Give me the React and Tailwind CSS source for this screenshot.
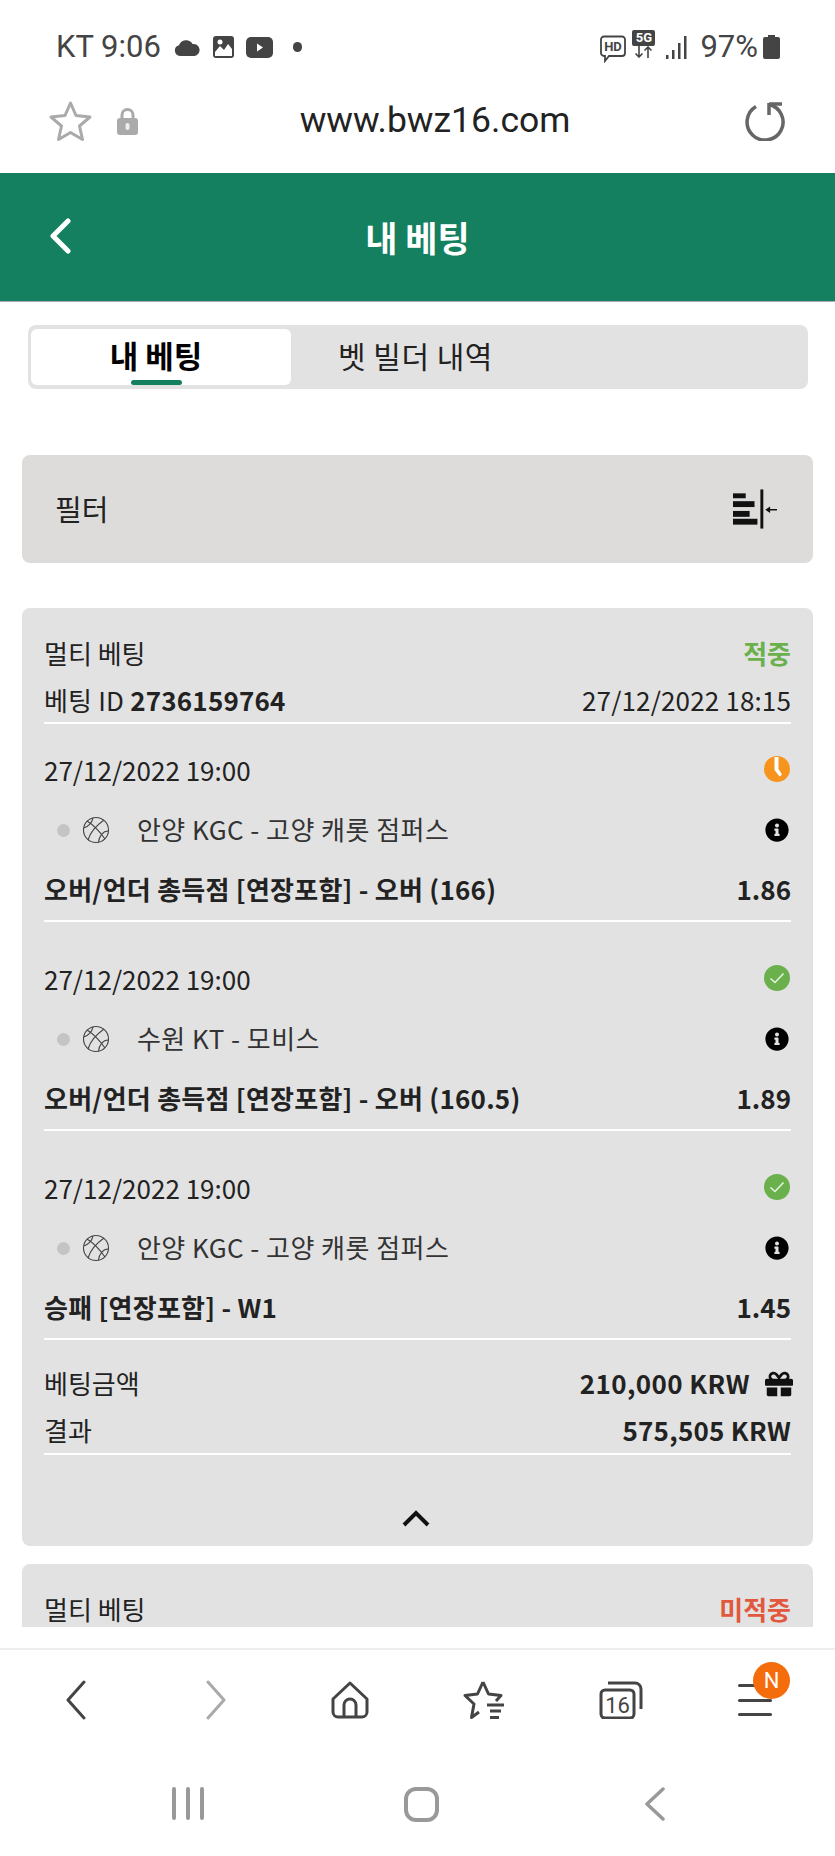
import { FaGift, FaInfoCircle } from "react-icons/fa";

function Ball() {
  return (
    <svg width="28" height="28" viewBox="0 0 28 28" fill="none" stroke="#444" strokeWidth="1.1">
      <circle cx="14" cy="14" r="12.5" />
      <path d="M5 5 C10 8 18 16 23 23" />
      <path d="M22 4 C15 9 8 17 6 24" />
      <path d="M1.8 12 C6 11 10 7 11 1.8" />
      <path d="M26.3 15 C21 15 17 20 16.5 26.3" />
    </svg>
  );
}

function Clock() {
  return (
    <svg width="26" height="26" viewBox="0 0 26 26">
      <circle cx="13" cy="13" r="13" fill="#f7941d" />
      <path d="M10.5 1 L10.5 14 L15.5 20.5 L18 18.5 L14.5 13 L14.5 1 Z" fill="#fff" />
    </svg>
  );
}

function Check() {
  return (
    <svg width="26" height="26" viewBox="0 0 26 26">
      <circle cx="13" cy="13" r="13" fill="#6ab04c" />
      <path d="M6.5 13.5 L11 17.5 L19.5 8.5" fill="none" stroke="#e8f3e2" strokeWidth="1.6" />
    </svg>
  );
}

function Leg({ time, status, game, market, odds }) {
  return (
    <div className="pt-6 border-b-2 border-white">
      <div className="h-12 flex items-center justify-between">
        <span className="pb-[5px]">{time}</span>
        <span className="mb-[6px] mr-px">{status === "wait" ? <Clock /> : <Check />}</span>
      </div>
      <div className="h-12 mt-[10px] flex items-center justify-between">
        <div className="flex items-center">
          <span className="w-[13px] h-[13px] rounded-full bg-[#c4c4c6] ml-[13px]" />
          <span className="ml-[12px]"><Ball /></span>
          <span className="ml-[27px] pb-[3px] text-[#333] tracking-[0.45px]">{game}</span>
        </div>
        <FaInfoCircle className="text-[24px] text-black mr-[2px]" />
      </div>
      <div className="h-12 mt-3 mb-[6px] flex items-center justify-between font-bold">
        <span className="pb-[3px] tracking-[0.25px]">{market}</span>
        <span className="pb-[3px]">{odds}</span>
      </div>
    </div>
  );
}

function StatusBar() {
  return (
    <div className="h-[94px] pl-[56px] pr-[55px] flex items-center justify-between text-[#444] font-['Roboto',sans-serif] text-[31px]">
      <div className="flex items-center">
        <span>KT 9:06</span>
        <svg className="ml-[13px]" width="26" height="17" viewBox="0 0 26 17" fill="#444">
          <path d="M6 17 A5.5 5.5 0 0 1 5 6.2 A7.5 7.5 0 0 1 18.5 5 A6 6 0 0 1 20.5 17 Z" />
        </svg>
        <svg className="ml-[12px]" width="23" height="24" viewBox="0 0 23 24">
          <rect x="1" y="1" width="21" height="22" rx="3" fill="#444" />
          <path d="M3 21 V17 L8 11 L12 15 L16 9 L20 14 V21 Z" fill="#fff" />
          <circle cx="8" cy="7" r="2.5" fill="#fff" />
        </svg>
        <svg className="ml-[11px]" width="27" height="21" viewBox="0 0 27 21">
          <rect width="27" height="21" rx="5" fill="#444" />
          <path d="M11 6.5 L17 10.5 L11 14.5 Z" fill="#fff" />
        </svg>
        <span className="w-[9px] h-[10px] rounded-full bg-[#444] ml-[20px]" />
      </div>
      <div className="flex items-center">
        <svg width="26" height="28" viewBox="0 0 26 28" className="mt-[4px]">
          <path d="M4 1.5 H22 A3 3 0 0 1 25 4.5 V18 A3 3 0 0 1 22 21 H9 L5 26 V21 H4 A3 3 0 0 1 1 18 V4.5 A3 3 0 0 1 4 1.5 Z" fill="none" stroke="#444" strokeWidth="1.8" />
          <text x="13" y="16" textAnchor="middle" fontSize="13" fontWeight="700" fill="#444" fontFamily="Roboto, sans-serif">HD</text>
        </svg>
        <div className="ml-[6px] w-[23px] flex flex-col items-center -mt-[6px]">
          <span className="w-[23px] h-[16px] bg-[#444] rounded-[2px] text-white text-[13px] font-bold leading-[16px] text-center">5G</span>
          <svg width="20" height="12" viewBox="0 0 20 12" fill="none" stroke="#444" strokeWidth="1.6">
            <path d="M5 0 V11 M1.5 7.5 L5 11 L8.5 7.5 M14 12 V1 M10.5 4.5 L14 1 L17.5 4.5" />
          </svg>
        </div>
        <svg className="ml-[11px]" width="22" height="23" viewBox="0 0 22 23" fill="#444">
          <rect x="0" y="19" width="2.5" height="4" />
          <rect x="6" y="14" width="2.5" height="9" />
          <rect x="12" y="7" width="2.5" height="16" />
          <rect x="18" y="0" width="2.5" height="23" />
        </svg>
        <span className="ml-[12px]">97%</span>
        <svg className="ml-[5px]" width="17" height="24" viewBox="0 0 17 24" fill="#444">
          <rect x="5" width="7" height="3" />
          <rect y="2" width="17" height="22" rx="2" />
        </svg>
      </div>
    </div>
  );
}

function AddressBar() {
  return (
    <div className="h-[79px] flex items-center justify-between pl-[49px] pr-[50px] pb-[26px]">
      <div className="flex items-center">
        <svg width="43" height="42" viewBox="0 0 43 42" fill="none" stroke="#aaa" strokeWidth="3" strokeLinejoin="round">
          <path d="M21.5 3 L27 15.5 L41 17 L30.5 26 L33.5 39.5 L21.5 32.5 L9.5 39.5 L12.5 26 L2 17 L16 15.5 Z" />
        </svg>
        <svg className="ml-[25px]" width="21" height="28" viewBox="0 0 21 28">
          <path d="M5 13 V8 A5.5 5.5 0 0 1 16 8 V13" fill="none" stroke="#aaa" strokeWidth="3" />
          <rect y="11" width="21" height="17" rx="3" fill="#aaa" />
          <rect x="8.5" y="16" width="4" height="7" rx="2" fill="#eee" />
        </svg>
      </div>
      <span className="font-['Roboto',sans-serif] text-[35.5px] text-[#222] mr-[13px]">www.bwz16.com</span>
      <svg width="40" height="40" viewBox="0 0 40 40" fill="none" stroke="#666" strokeWidth="3.5">
        <path d="M11 5.5 A18 18 0 1 0 24 3.5" />
        <path d="M24 3 H37 M24 2 V14" />
      </svg>
    </div>
  );
}

function BottomBar() {
  return (
    <div className="border-t-2 border-[#eee] bg-white">
      <div className="h-[104px] pl-[66px] flex items-center pb-[4px]">
        <svg width="20" height="40" viewBox="0 0 20 40" fill="none" stroke="#444" strokeWidth="3" strokeLinecap="round" strokeLinejoin="round">
          <path d="M18 2 L2 20 L18 38" />
        </svg>
        <svg className="ml-[120px]" width="20" height="40" viewBox="0 0 20 40" fill="none" stroke="#aaa" strokeWidth="3" strokeLinecap="round" strokeLinejoin="round">
          <path d="M2 2 L18 20 L2 38" />
        </svg>
        <svg className="ml-[105px]" width="38" height="38" viewBox="0 0 38 38" fill="none" stroke="#444" strokeWidth="3" strokeLinejoin="round">
          <path d="M19 2 L36 18 V31 A5 5 0 0 1 31 36 H7 A5 5 0 0 1 2 31 V18 Z" />
          <path d="M13 36 V24 A6 6 0 0 1 25 24 V36" />
        </svg>
        <svg className="ml-[94px]" width="42" height="40" viewBox="0 0 42 40" fill="none" stroke="#444" strokeWidth="3" strokeLinejoin="round">
          <path d="M20 2 L25.5 14 L38 15.5 L33 21 M20 2 L14.5 14 L2 15.5 L11 24 L8.5 37.5 L16 32" />
          <path d="M24 25 H41 M27 31 H38 M27 37.5 H36" />
        </svg>
        <svg className="ml-[94px]" width="44" height="38" viewBox="0 0 44 38" fill="none" stroke="#444" strokeWidth="3">
          <path d="M9 2 H36 A6 6 0 0 1 42 8 V28" />
          <rect x="2" y="9" width="33" height="28" rx="4" />
          <text x="18.5" y="32" textAnchor="middle" fontSize="22" fill="#444" stroke="none" fontFamily="Roboto, sans-serif">16</text>
        </svg>
        <div className="relative ml-[95px] w-[34px] h-[32px] flex flex-col justify-between">
          <span className="h-[3px] rounded bg-[#444]" />
          <span className="h-[3px] rounded bg-[#444]" />
          <span className="h-[3px] rounded bg-[#444]" />
          <span className="absolute -top-[22px] left-[15px] w-[37px] h-[37px] rounded-full bg-[#f46c0c] text-white text-[22px] font-['Roboto',sans-serif] flex items-center justify-center">
            N
          </span>
        </div>
      </div>
      <div className="h-[102px] flex items-start pl-[172px] pt-[33px]">
        <div className="w-[32px] h-[33px] flex justify-between">
          <span className="w-[4px] h-full rounded bg-[#999]" />
          <span className="w-[4px] h-full rounded bg-[#999]" />
          <span className="w-[4px] h-full rounded bg-[#999]" />
        </div>
        <div className="ml-[200px] w-[35px] h-[35px] border-4 border-[#999] rounded-[12px]" />
        <svg className="ml-[206px]" width="20" height="34" viewBox="0 0 20 34" fill="none" stroke="#999" strokeWidth="3.5" strokeLinecap="round" strokeLinejoin="round">
          <path d="M18 2 L2 17 L18 32" />
        </svg>
      </div>
    </div>
  );
}

export default function App() {
  return (
    <div className="w-[835px] h-[1856px] bg-white flex flex-col overflow-hidden font-['Noto_Sans_CJK_KR','Noto_Sans',sans-serif] text-[#222]">
      <StatusBar />
      <AddressBar />

      <div className="h-[129px] shrink-0 bg-[#15805f] flex items-center border-b border-[#aab]">
        <svg className="ml-[49px] -mt-[2px]" width="22" height="36" viewBox="0 0 22 36" fill="none" stroke="#fff" strokeWidth="5" strokeLinecap="round" strokeLinejoin="round">
          <path d="M19 3 L4 18 L19 33" />
        </svg>
        <h1 className="flex-1 text-center pr-[71px] text-[35px] font-bold text-white">내 베팅</h1>
      </div>

      <div className="flex-1 overflow-hidden px-[22px]">
        <div className="mt-[23px] ml-[6px] mr-[5px] h-[64px] rounded-lg bg-[#e2e2e2] pl-[3px] pt-[4px] flex">
          <div className="relative w-[260px] h-[56px] rounded-md bg-white flex items-center justify-center text-[31px] font-bold text-black pb-1 pr-[10px]">
            내 베팅
            <span className="absolute bottom-0 left-[100px] w-[51px] h-[5px] rounded bg-[#15805f]" />
          </div>
          <div className="ml-[47px] h-[56px] flex items-center text-[30px] tracking-[0.5px] text-[#222] pb-1">벳 빌더 내역</div>
        </div>

        <div className="mt-[66px] h-[108px] rounded-lg bg-[#dddcdb] pl-[33px] pr-[36px] flex items-center justify-between">
          <span className="text-[29px]">필터</span>
          <svg width="44" height="40" viewBox="0 0 45 40" fill="#111">
            <rect x="0" y="4" width="13" height="5" />
            <rect x="0" y="12" width="22" height="6" />
            <rect x="0" y="22" width="17" height="6" />
            <rect x="0" y="30" width="25" height="6" />
            <rect x="28" y="0" width="3" height="40" />
            <rect x="35" y="20" width="10" height="1.5" />
            <path d="M33 20.7 L38 17.5 V24 Z" />
          </svg>
        </div>

        <div className="mt-[45px] h-[938px] rounded-lg bg-[#e2e2e2] pt-[21px] px-[22px] text-[26px]">
          <div className="h-12 flex items-center justify-between">
            <span className="pb-[2px]">멀티 베팅</span>
            <span className="pb-[2px] font-bold text-[#6ab04c]">적중</span>
          </div>
          <div className="h-[45px] flex items-center justify-between border-b-2 border-white box-content">
            <span className="tracking-[0.2px]">베팅 ID <b>2736159764</b></span>
            <span className="tracking-[0.15px]">27/12/2022 18:15</span>
          </div>
          <div className="flex flex-col gap-[11px]">
            <Leg time="27/12/2022 19:00" status="wait" game="안양 KGC - 고양 캐롯 점퍼스" market="오버/언더 총득점 [연장포함] - 오버 (166)" odds="1.86" />
            <Leg time="27/12/2022 19:00" status="ok" game="수원 KT - 모비스" market="오버/언더 총득점 [연장포함] - 오버 (160.5)" odds="1.89" />
            <Leg time="27/12/2022 19:00" status="ok" game="안양 KGC - 고양 캐롯 점퍼스" market="승패 [연장포함] - W1" odds="1.45" />
          </div>
          <div className="mt-[20px] h-12 flex items-center justify-between">
            <span className="pb-[3px]">베팅금액</span>
            <span className="flex items-center font-bold tracking-[0.4px]">
              <span className="pb-[3px]">210,000 KRW</span>
              <FaGift className="ml-[15px] text-[28px] text-[#111] -mr-[2px]" />
            </span>
          </div>
          <div className="h-[45px] flex items-center justify-between border-b-2 border-white box-content">
            <span className="pb-[3px]">결과</span>
            <span className="pb-[3px] font-bold tracking-[0.25px]">575,505 KRW</span>
          </div>
          <div className="mt-[55px] pr-[3px] flex justify-center">
            <svg width="28" height="17" viewBox="0 0 28 17" fill="none" stroke="#111" strokeWidth="4">
              <path d="M2 15 L14 3 L26 15" />
            </svg>
          </div>
        </div>

        <div className="mt-[18px] h-[63px] overflow-hidden rounded-t-lg bg-[#e2e2e2] pt-[21px] px-[22px] text-[26px]">
          <div className="h-12 flex items-center justify-between">
            <span className="pb-[2px]">멀티 베팅</span>
            <span className="pb-[2px] font-bold text-[#e2583e]">미적중</span>
          </div>
        </div>
      </div>

      <BottomBar />
    </div>
  );
}
